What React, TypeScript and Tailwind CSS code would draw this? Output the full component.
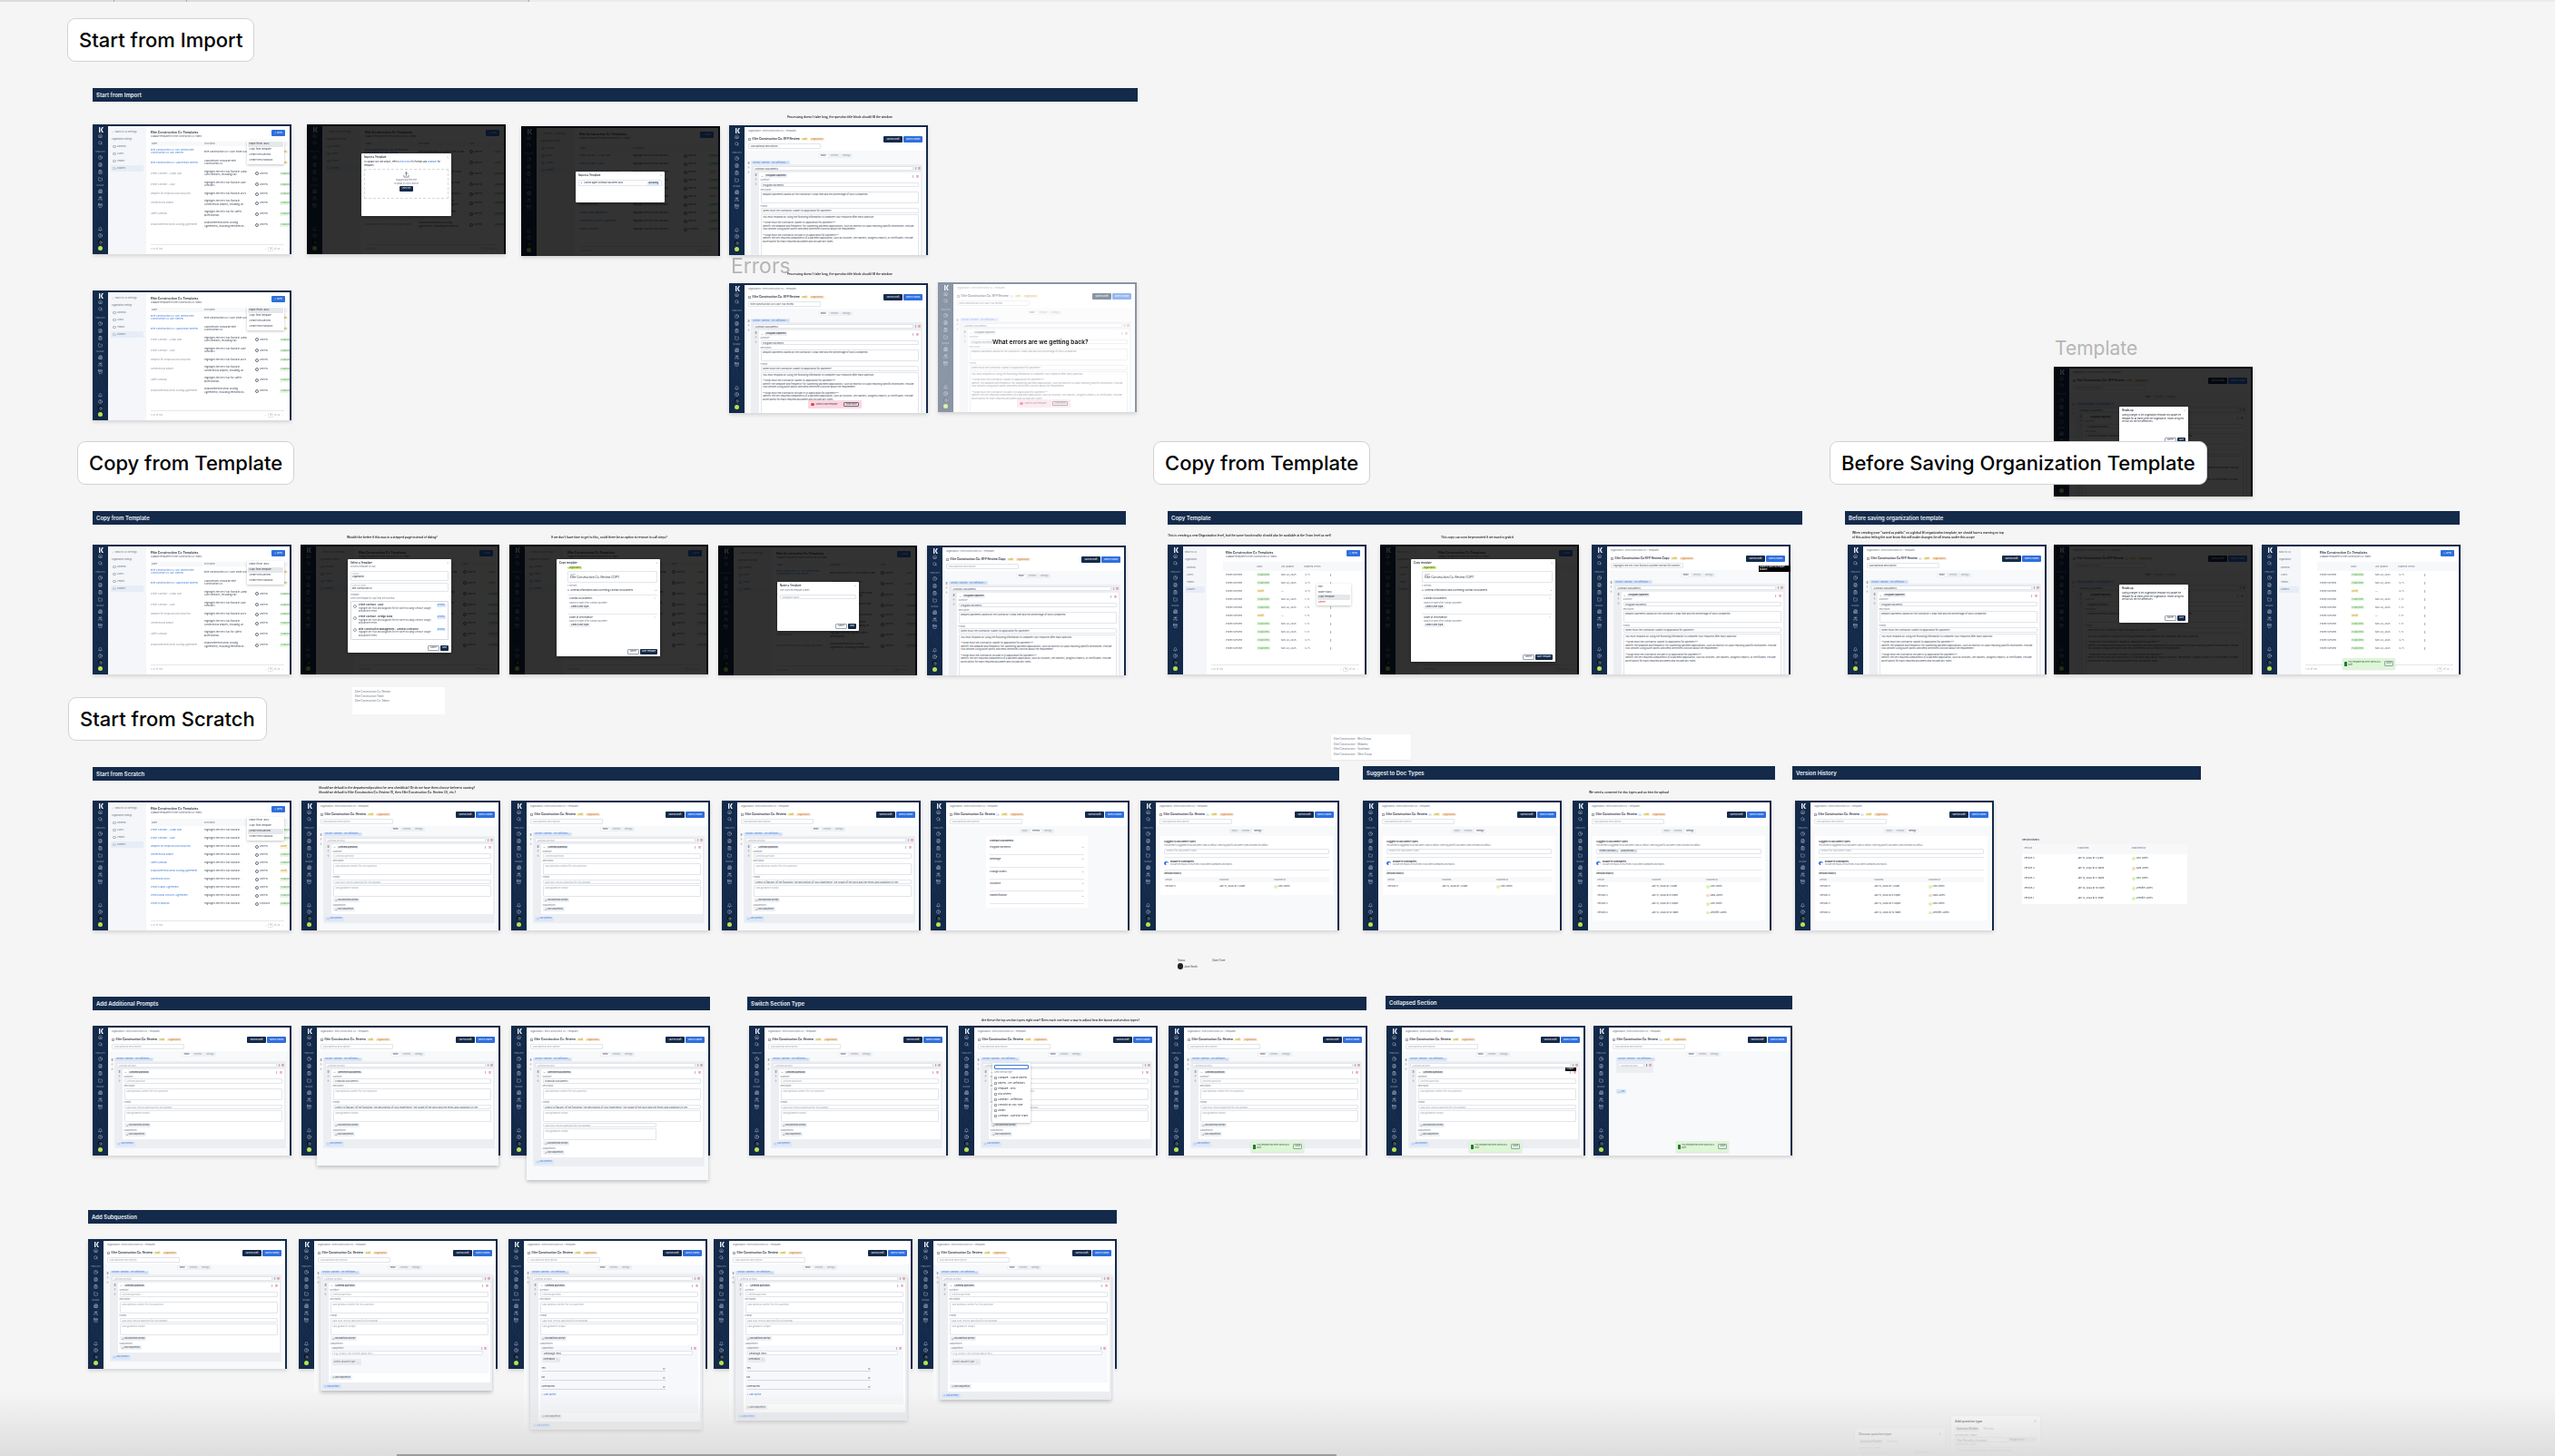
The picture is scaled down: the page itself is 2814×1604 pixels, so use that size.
import type { ReactNode } from "react";
import {
  Archive, ArrowDown, ArrowUp, Bell, Building2, ChevronDown, ChevronLeft, ChevronRight, CircleHelp, ClipboardList,
  Clock, FileText, Folder, GripVertical, Home, MoreVertical, Plus, Search, Settings, Trash2, Upload, Users, X,
} from "lucide-react";

const PROMPT_1 = "You must respond by using the following information to complete your response after each question.";
const PROMPT_2 = "**What must the Contractor submit its application for payment?**";
const PROMPT_3 = "Identify the deadline and frequency for submitting payment applications, such as monthly or upon reaching specific milestones. Provide your answer using bullet points and keep sentences concise about the requirement.";
const PROMPT_4 = "**What must the Contractor include in its application for payment?**";
const PROMPT_5 = "Identify the key required components of a payment application, such as invoices, lien waivers, progress reports, or certificates. Provide bullet points for each required document and include any notes.";

const importRows = [
  { name: "Elite Construction Co. RFP Review Elite Construction Co. RFP Review", desc: "Elite Construction Co.'s RFP Pride Scope", link: true, status: "d" },
  { name: "Elite Construction Co. Subcontract Review", desc: "Subcontracts should be Elite Construction Co.", link: true, status: "d" },
  { name: "Prime Contract - Lump Sum", desc: "Highlights the key risks found in Lump Sum contracts, including Pay...", status: "p" },
  { name: "Prime Contract - GMP", desc: "Highlights the key risks found in GMP contracts.", status: "p" },
  { name: "Request for Proposal (RFP/RFQ/ITB)", desc: "Highlights the key risks found in RFPs.", short: true, status: "p" },
  { name: "Geotechnical Report", desc: "Highlights the key risks found in Geotechnical Reports, including Ge...", status: "p" },
  { name: "Safety Manual", desc: "Highlights the key risks for Safety professionals.", status: "p" },
  { name: "Disbursement/Escrow Closing Agreement", desc: "Disbursement/Escrow Closing Agreements, including Permitted Ex...", status: "p" },
];

const scratchRows = [
  "Prime Contract - Lump Sum", "Prime Contract - GMP", "Request for Proposal (RFP/RFQ/ITB)", "Geotechnical Report", "Safety Manual",
  "Disbursement/Escrow Closing Agreement", "Ownership Policy", "Project Labor Agreement", "Professional Services Agreement", "Project Playbook",
];

const docRows = [
  { s: "Published", d: "Nov 24, 2025", v: "4 / 5" }, { s: "Published", d: "Nov 24, 2025", v: "4 / 5" },
  { s: "Draft", d: "—", v: "4 / 5" }, { s: "Published", d: "Nov 24, 2025", v: "1 / 5" },
  { s: "Published", d: "Nov 24, 2025", v: "1 / 5" }, { s: "Draft", d: "—", v: "1 / 5" },
  { s: "Published", d: "Nov 24, 2025", v: "1 / 5" }, { s: "Published", d: "Nov 24, 2025", v: "1 / 5" },
  { s: "Published", d: "Nov 24, 2025", v: "4 / 5" }, { s: "Published", d: "Nov 24, 2025", v: "4 / 5" },
];

const versions = [
  { v: "Version 5", d: "Jan 15, 2026 at 1:23am", n: "Alex Smith", c: "bg-[#d9f2b4]" },
  { v: "Version 4", d: "Jan 15, 2026 at 9:45pm", n: "Sara Jones", c: "bg-[#f9d9c2]" },
  { v: "Version 3", d: "Jan 14, 2026 at 5:40pm", n: "Alex Smith", c: "bg-[#d9f2b4]" },
  { v: "Version 2", d: "Jan 14, 2026 at 10:19am", n: "Jennifer Jones", c: "bg-[#d9f2b4]" },
  { v: "Version 1", d: "Jan 13, 2026 at 9:47am", n: "Jennifer Jones", c: "bg-[#d9f2b4]" },
];

const Sidebar = () => (
  <div className="relative flex h-[143px] w-[17px] shrink-0 flex-col items-center overflow-hidden pt-[3px] text-[#c4cfdd]">
    <svg viewBox="0 0 17 143" className="absolute inset-0 h-full w-full" fill="none" stroke="#20395f" strokeWidth="0.5">
      <path d="M0 50 C10 60 14 75 6 88 C0 98 10 108 17 112" />
      <path d="M17 70 C8 78 4 92 12 104" />
    </svg>
    <svg viewBox="0 0 6 6" className="relative h-[6px] w-[6px]" fill="#e8edf4">
      <path d="M1 0h1.4v6H1zM3 2.6 4.4 0H6L4.3 3 6 6H4.4L3 3.4z" />
    </svg>
    <div className="relative mt-[1px] flex flex-col gap-[3px]">
      <Home size={5} />
      <Search size={5} />
    </div>
    <div className="relative mt-[6px] h-[3px] text-[1.8px] leading-[3px] text-[#8fa0b8]">TEMPLATES</div>
    <div className="relative mt-[2px] flex flex-col gap-[3px]">
      <Clock size={5} />
      <FileText size={5} />
      <ClipboardList size={5} />
      <Folder size={5} />
    </div>
    <div className="relative mt-[3px] h-[3px] text-[1.8px] leading-[3px] text-[#8fa0b8]">MANAGE</div>
    <div className="relative mt-[2px] flex flex-col gap-[3px]">
      <Building2 size={5} />
      <Users size={5} />
      <Archive size={5} />
    </div>
    <div className="relative mt-auto mb-[4px] flex flex-col items-center gap-[2px]">
      <Bell size={5} />
      <CircleHelp size={5} />
      <div className="flex h-[5px] w-[5px] items-center justify-center rounded-full bg-[#060d18]">
        <Settings size={4} />
      </div>
      <div className="h-[5px] w-[5px] rounded-full bg-[#b6e34f]" />
    </div>
  </div>
);

const Dim = () => <div className="absolute inset-0 bg-black/80" />;
const Fade = () => <div className="absolute inset-0 bg-white/50" />;

function Frame({ children, className = "" }: { children: ReactNode; className?: string }) {
  return (
    <div className={`absolute flex h-[143px] w-[219px] items-start bg-[#142a4a] text-[2.6px] leading-[3.4px] text-[#1d2635] shadow-[0_2px_4px_rgba(0,0,0,0.14)] blur-[0.35px] ${className}`}>
      <Sidebar />
      {children}
    </div>
  );
}

const StatusChip = ({ s }: { s: string }) => (
  <span className={`rounded-[1px] px-[1.5px] ${s === "Draft" ? "bg-[#fdf6d8] text-[#a88a22]" : "bg-[#e6f8e0] text-[#4a9c50]"}`}>{s}</span>
);

const SettingsNav = () => (
  <div className="h-[141px] w-[42px] shrink-0 bg-[#f4f6f9] px-[3px] pt-[5px] text-[#6b7280]">
    <div className="flex items-center gap-[1px] pl-[1px]"><ChevronLeft size={3} />Back to All Settings</div>
    <div className="mt-[5px] pl-[1px] text-[2.2px]">Organization Settings</div>
    <div className="mt-[2px] flex flex-col gap-[1px]">
      {["General", "Users", "Teams"].map((i) => (
        <div key={i} className="flex h-[7px] items-center gap-[1.5px] pl-[2px]"><span className="h-[3.5px] w-[3.5px] rounded-full border-[0.4px] border-[#9ca3af]" />{i}</div>
      ))}
      <div className="flex h-[7px] items-center gap-[1.5px] rounded-[1px] bg-[#e6edf7] pl-[2px]"><Folder size={3.5} />Folders</div>
    </div>
  </div>
);

const Menu = ({ active, items }: { active: number; items: string[] }) => (
  <div className="absolute top-[16px] left-[111px] w-[41px] rounded-[1px] bg-white p-[1px] text-[#374151] shadow-[0_1px_3px_rgba(0,0,0,0.25)]">
    {items.map((it, i) => (
      <div key={it} className={`flex h-[6px] items-center rounded-[1px] px-[1.5px] ${i === active ? "bg-[#e5e7eb]" : ""}`}>{it}</div>
    ))}
  </div>
);

function PageHead() {
  return (
    <div className="flex items-start justify-between pr-[5px]">
      <div className="pt-[1px]">
        <div className="text-[3.4px] leading-[4.4px] font-semibold whitespace-nowrap">Elite Construction Co Templates</div>
        <div className="mt-[0.5px] text-[2.3px] whitespace-nowrap text-[#4b5563]">Available templates for Elite Construction Co. teams.</div>
      </div>
      <div className="flex h-[7px] w-[15px] items-center justify-center gap-[0.5px] rounded-[1px] bg-[#2f6fde] text-white"><Plus size={2.5} />New</div>
    </div>
  );
}

const Pager = () => (
  <div className="absolute right-[6px] bottom-[3px] left-[5px] flex items-center justify-between border-t-[0.5px] border-[#e5e7eb] pt-[2px] text-[#9ca3af]">
    <span>1-10 of 100</span>
    <span className="flex items-center gap-[1.5px]"><ChevronLeft size={3} /><span className="rounded-[1px] border-[0.4px] border-[#e5e7eb] px-[1px] text-[#1d2635]">1</span>of 20<ChevronRight size={3} /></span>
  </div>
);

function ListScreen({ menu = -1, overlay, className }: { menu?: number; overlay?: ReactNode; className?: string }) {
  return (
    <Frame className={className}>
      <div className="mt-[2px] mr-[2px] flex h-[141px] flex-1 overflow-hidden bg-white">
        <SettingsNav />
        <div className="relative min-w-0 flex-1 pt-[4px] pl-[5px]">
          <PageHead />
          <div className="mt-[4px] flex h-[5px] items-center bg-[#f7f8fa] text-[2.2px] text-[#6b7280]">
            <span className="w-[59px] pl-[1px]">Name</span><span className="w-[56px]">Description</span><span>Type</span>
          </div>
          {importRows.map((r, i) => (
            <div key={i} className={`flex items-center ${r.short ? "h-[8.5px]" : "h-[12px]"} whitespace-nowrap`}>
              <span className={`w-[55px] shrink-0 whitespace-normal ${r.link ? "text-[#3b77d9]" : "text-[#8d95a3]"}`}>{r.name}</span>
              <span className="ml-[4px] w-[50px] shrink-0 whitespace-normal text-[#374151]">{r.desc}</span>
              <span className="ml-[6px] flex w-[27px] shrink-0 items-center gap-[1px] text-[#4b5563]"><span className="h-[4px] w-[4px] rounded-full border-[0.4px] border-[#6b7280]" />Review</span>
              <StatusChip s={r.status === "d" ? "Draft" : "Published"} />
            </div>
          ))}
          <Pager />
          {menu >= 0 && <Menu active={menu} items={["Import from .docx", "Copy from template", "Create new Review", "Create new Playbook"]} />}
        </div>
      </div>
      {overlay}
    </Frame>
  );
}

function ScratchList({ menu = -1, overlay, className }: { menu?: number; overlay?: ReactNode; className?: string }) {
  return (
    <Frame className={className}>
      <div className="mt-[2px] mr-[2px] flex h-[141px] flex-1 overflow-hidden bg-white">
        <SettingsNav />
        <div className="relative min-w-0 flex-1 pt-[4px] pl-[5px]">
          <PageHead />
          <div className="mt-[5px] flex h-[8px] items-center bg-[#f7f8fa] text-[2.2px] text-[#6b7280]">
            <span className="w-[59px] pl-[1px]">Name</span><span>Description</span>
          </div>
          {scratchRows.map((n, i) => (
            <div key={n} className="flex h-[9px] items-center whitespace-nowrap">
              <span className="w-[59px] shrink-0 overflow-hidden text-[#3b77d9]">{n}</span>
              <span className="w-[56px] shrink-0 overflow-hidden text-[#374151]">Highlights the key risks found in ...</span>
              <span className="flex w-[27px] shrink-0 items-center gap-[1px] text-[#4b5563]"><span className="h-[4px] w-[4px] rounded-full border-[0.4px] border-[#6b7280]" />{i === 9 ? "Playbook" : "Review"}</span>
              <StatusChip s={i === 2 || i === 5 ? "Draft" : "Published"} />
            </div>
          ))}
          <Pager />
          {menu >= 0 && <Menu active={menu} items={["Import from .docx", "Copy from template", "Create new Review", "Create new Playbook"]} />}
        </div>
      </div>
      {overlay}
    </Frame>
  );
}

function DocsList({ menu = false, overlay, className }: { menu?: boolean; overlay?: ReactNode; className?: string }) {
  return (
    <Frame className={className}>
      <div className="mt-[2px] mr-[2px] flex h-[141px] flex-1 overflow-hidden bg-white">
        <div className="h-[141px] w-[26px] shrink-0 bg-[#f4f6f9] px-[2px] pt-[5px] text-[#6b7280]">
          <div className="whitespace-nowrap">Back to All</div>
          <div className="mt-[5px] text-[2.2px] whitespace-nowrap">Organization</div>
          <div className="mt-[3px] flex flex-col gap-[1px]">
            {["General", "Users", "Teams"].map((i) => <div key={i} className="flex h-[7px] items-center pl-[2px]">{i}</div>)}
            <div className="flex h-[7px] items-center rounded-[1px] bg-[#e6edf7] pl-[2px]">Folders</div>
          </div>
        </div>
        <div className="relative min-w-0 flex-1 pt-[4px] pl-[21px]">
          <PageHead />
          <div className="mt-[4px] -ml-[3px] flex h-[10px] items-center bg-[#f7f8fa] text-[2.2px] text-[#6b7280]">
            <span className="ml-[37px] w-[27px]">Status</span><span className="w-[25px]">Last Updated</span><span>Published Version</span>
          </div>
          {docRows.map((r, i) => (
            <div key={i} className="flex h-[9px] items-center whitespace-nowrap text-[#4b5563]">
              <span className="w-[34px] shrink-0 overflow-hidden">Project Review</span>
              <span className="w-[27px] shrink-0"><StatusChip s={r.s} /></span>
              <span className="w-[26px] shrink-0">{r.d}</span>
              <span className="w-[27px] shrink-0">{r.v}</span>
              <MoreVertical size={3} />
            </div>
          ))}
          <Pager />
          {menu && (
            <div className="absolute top-[41px] left-[121px] w-[38px] rounded-[1px] bg-white p-[1px] text-[#374151] shadow-[0_1px_3px_rgba(0,0,0,0.25)]">
              <div className="flex h-[5.5px] items-center px-[1px]">Edit</div>
              <div className="flex h-[5.5px] items-center px-[1px]">Make Public</div>
              <div className="flex h-[5.5px] items-center rounded-[1px] bg-[#e5e7eb] px-[1px]">Copy template</div>
              <div className="flex h-[5.5px] items-center px-[1px] text-[#dc2626]">Delete</div>
            </div>
          )}
        </div>
      </div>
      {overlay}
    </Frame>
  );
}

const Field = ({ text, muted = false, className = "h-[5.5px]" }: { text?: string; muted?: boolean; className?: string }) => (
  <div className={`rounded-[1px] border-[0.4px] border-[#e2e5ea] bg-white px-[1.5px] py-[0.8px] whitespace-pre-line ${muted ? "text-[#9ca3af]" : "text-[#374151]"} ${className}`}>{text}</div>
);
const Mini = ({ children }: { children: ReactNode }) => <div className="mt-[1.5px] mb-[0.5px] text-[2.2px] leading-[3px] text-[#6b7280]">{children}</div>;
const AddChip = ({ text, blue = false }: { text: string; blue?: boolean }) => (
  <div className={`inline-flex h-[5px] items-center gap-[0.5px] rounded-[1px] px-[2px] text-[2.2px] ${blue ? "bg-[#dbe7f8] text-[#3b77d9]" : "bg-[#eef0f4] text-[#374151]"}`}><Plus size={2.5} />{text}</div>
);
const Stack = () => (
  <div className="flex w-[6px] shrink-0 flex-col items-center gap-[2px] pt-[1px] text-[#6b7280]">
    <GripVertical size={3} /><ArrowUp size={3} /><ArrowDown size={3} />
  </div>
);

type QuestionProps = { filled?: boolean; prompts?: boolean; sub?: number; subPad?: string; long?: boolean; clipped?: boolean };

function Question({ filled = false, prompts = false, sub = 0, subPad = "", long = false, clipped = false }: QuestionProps) {
  return (
    <div className="flex gap-[0.5px]">
      <Stack />
      <div className="min-w-0 flex-1 rounded-[1px] bg-white px-[2px] pt-[2px] pb-[2.5px]">
        <div className="flex items-center justify-between">
          <div className="flex items-center gap-[1.5px]"><ChevronDown size={3} /><span className="rounded-[1px] bg-[#eef0f4] px-[1.5px] font-medium">{clipped ? "Program Payment" : filled ? "Retrieve Documents" : "Untitled question"}</span></div>
          <div className="flex items-center gap-[2px]"><MoreVertical size={3} className="text-[#6b7280]" /><Trash2 size={3} className="text-[#d9415c]" /></div>
        </div>
        <Mini>Question*</Mini>
        <Field text={clipped ? "Program Payments" : filled ? "Financial Documents" : "Untitled question"} muted={!filled && !clipped} />
        <Mini>Description</Mini>
        <Field text={clipped ? "Request payments based on the contractor's lead time and the percentage of work completed." : "Add optional context for this question"} muted={!clipped} className="h-[13px]" />
        <Mini>Prompt</Mini>
        {clipped ? (
          <>
            <Field text="When must the Contractor submit its application for payment?" />
            <Field className="mt-[1px] h-[60px] overflow-hidden" text={`${PROMPT_1}\n\n${PROMPT_2}\n${PROMPT_3}\n\n${PROMPT_4}\n${PROMPT_5}`} />
          </>
        ) : (
          <>
            <Field text={long ? "Check to flag any of the following: the description of your experience, the scope of the work and the terms and conditions in the document" : "Add your yes/no question for this prompt"} muted={!long} className="h-[5.5px] overflow-hidden whitespace-nowrap" />
            <Field text="Add guidance output" muted className="mt-[0.5px] h-[13px]" />
            {prompts && (
              <>
                <Field text="Add your yes/no question for this prompt" muted className="mt-[1px] h-[5.5px] w-[72%]" />
                <Field text="Add guidance output" muted className="mt-[0.5px] h-[13px] w-[72%]" />
              </>
            )}
            <div className="mt-[1.5px]"><AddChip text="Add additional prompt" /></div>
            <Mini>Subquestions</Mini>
            {sub === 1 && (
              <div className={`mb-[1.5px] rounded-[1px] bg-[#f7f8fb] p-[2px] ${subPad}`}>
                <div className="flex justify-between text-[2.2px] text-[#6b7280]">Subquestion<span className="flex gap-[1px]"><MoreVertical size={3} /><Trash2 size={3} className="text-[#d9415c]" /></span></div>
                <Field text="e.g. What is the section about this?" muted className="mr-[4px] mb-[4px] h-[5.5px]" />
                <div className="inline-flex h-[7px] items-center gap-[2px] rounded-[1px] bg-[#e9ebef] px-[2px] text-[#6b7280]">Select answer type<ChevronRight size={2.5} /></div>
              </div>
            )}
            {sub === 2 && (
              <div className={`mb-[1.5px] rounded-[1px] bg-[#f7f8fb] p-[2px] ${subPad}`}>
                <div className="flex justify-between text-[2.2px] text-[#6b7280]">Subquestion<span className="flex gap-[1px]"><MoreVertical size={3} /><Trash2 size={3} className="text-[#d9415c]" /></span></div>
                <Field text="Retainage Held" className="mr-[4px] mb-[1.5px] h-[5.5px]" />
                <div className="inline-flex h-[6.5px] items-center gap-[2px] rounded-[1px] bg-[#e9ebef] px-[2px] text-[#374151]">Checkbox<ChevronRight size={2.5} /></div>
                {["Yes", "No", "Unresolved"].map((o) => (
                  <div key={o} className="mt-[5px] flex w-[80%] items-center justify-between border-b-[0.5px] border-[#d6d9df] pb-[0.5px]">{o}<Trash2 size={2.5} className="text-[#6b7280]" /></div>
                ))}
                <div className="mt-[4px] text-[#3b77d9]">+ Add option</div>
              </div>
            )}
            <AddChip text="Add subquestion" />
          </>
        )}
      </div>
    </div>
  );
}

function EditorHead({ title, blue = false, desc }: { title: string; blue?: boolean; desc?: string }) {
  return (
    <>
      <div className="pt-[3px] pl-[4px] text-[2.3px] text-[#6b7280]">Organization / Elite Construction Co. / Templates</div>
      <div className="mt-[3.5px] flex items-start justify-between pr-[4px] pl-[4px]">
        <div className="flex h-[7px] items-center gap-[1.5px] whitespace-nowrap">
          <span className="h-[3.5px] w-[3px] rounded-[0.5px] border-[0.4px] border-[#9ca3af]" />
          <span className="text-[3.2px] font-semibold">{title}</span>
          {blue && <span className="h-[3.5px] w-[3.5px] rounded-full bg-[#dbe7f8]" />}
          <span className="rounded-[1px] bg-[#fdf3c8] px-[1.5px] text-[2.2px] text-[#a3881c]">Draft</span>
          <span className="rounded-[1px] bg-[#fde6d3] px-[1.5px] text-[2.2px] text-[#c27c3a]">Organization</span>
        </div>
        <div className="flex gap-[1px] text-[2.2px] text-white">
          <span className="flex h-[7px] w-[21px] items-center justify-center rounded-[1px] bg-[#142a4a]">Save as Draft</span>
          <span className="flex h-[7px] w-[21px] items-center justify-center rounded-[1px] bg-[#2f6fde]">Save & Publish</span>
        </div>
      </div>
      <div className="mt-[1.5px] pl-[4px]"><Field text={desc ?? "Add optional description"} muted={!desc} className="h-[5.5px] w-[80px] overflow-hidden whitespace-nowrap" /></div>
    </>
  );
}

const Tabs = ({ active = 0 }: { active?: number }) => (
  <div className="flex justify-center">
    <div className="flex h-[5.5px] items-center gap-[1px] rounded-[1px] bg-[#eef0f4] px-[0.5px] text-[2.2px] text-[#8a93a1]">
      {["Editor", "Preview", "Settings"].map((t, i) => (
        <span key={t} className={`rounded-[1px] px-[2px] ${i === active ? "bg-white text-[#1d2635]" : ""}`}>{t}</span>
      ))}
    </div>
  </div>
);

type EditorProps = QuestionProps & {
  title?: string; blue?: boolean; desc?: string;
  tail?: "none" | "panel" | "section"; height?: string; overlay?: ReactNode; className?: string; roomy?: boolean;
};

function Editor({ title = "Elite Construction Co. Review", blue, desc, filled, clipped, prompts, long, sub = 0, subPad, tail = "none", height = "h-[141px]", overlay, className, roomy }: EditorProps) {
  const section = tail === "section";
  return (
    <Frame className={className}>
      <div className={`mt-[2px] mr-[2px] flex min-w-0 flex-1 flex-col bg-white ${height} ${section ? "" : "overflow-hidden"} ${tail === "panel" ? "relative z-10 shadow-[0_2px_4px_rgba(0,0,0,0.22)]" : ""}`}>
        <EditorHead title={title} blue={blue} desc={desc} />
        <div className={`mt-[2px] flex flex-1 flex-col bg-[#f8f9fb] ${roomy ? "pt-[3px]" : "pt-[1px]"}`}>
          <Tabs />
          <div className={`flex pr-[4px] pl-[1px] ${roomy ? "mt-[3px]" : "mt-[0.5px]"}`}>
            <Stack />
            <div className="min-w-0 flex-1">
              <div className="inline-flex h-[4px] items-center gap-[1px] rounded-[1px] bg-[#dbe7f8] px-[2px] text-[2.2px] text-[#3b77d9]">Section 1 (Review) · Key Definitions<X size={2} /></div>
              <div className={`rounded-[1px] bg-[#eceef2] p-[2px] ${section ? "relative z-10 shadow-[0_2px_4px_rgba(0,0,0,0.25)]" : ""}`}>
                <div className="mb-[2px] flex items-center gap-[1px]">
                  <Field text={clipped ? "Contract Documents" : "Untitled section"} muted={!clipped} className="h-[5px] flex-1" />
                  <MoreVertical size={3} className="text-[#6b7280]" /><Trash2 size={3} className="text-[#d9415c]" />
                </div>
                <Question filled={filled} clipped={clipped} prompts={prompts} long={long} sub={sub} subPad={subPad} />
                <div className="mt-[2.5px]"><AddChip text="Add question" blue /></div>
              </div>
            </div>
          </div>
        </div>
      </div>
      {overlay}
    </Frame>
  );
}

function CollapsedEditor({ overlay, className }: { overlay?: ReactNode; className?: string }) {
  return (
    <Frame className={className}>
      <div className="mt-[2px] mr-[2px] flex h-[141px] min-w-0 flex-1 flex-col overflow-hidden bg-white">
        <EditorHead title="Elite Construction Co. Review" blue />
        <div className="mt-[2px] flex-1 bg-[#f8f9fb] pt-[1px] pl-[8px]">
          <Tabs />
          <div className="mt-[0.5px] inline-flex h-[4px] items-center gap-[1px] rounded-[1px] bg-[#dbe7f8] px-[2px] text-[2.2px] text-[#3b77d9]">Section 1 (Review) · Key Definitions<X size={2} /></div>
          <div className="mt-[0.5px] flex w-[41px] items-center gap-[1px] rounded-[1px] bg-[#eceef2] p-[2px] pb-[6px]">
            <Field text="Untitled section" muted className="h-[5px] flex-1" /><MoreVertical size={3} /><Trash2 size={3} className="text-[#d9415c]" />
          </div>
          <div className="mt-[18px]"><AddChip text="Add" blue /></div>
        </div>
      </div>
      {overlay}
    </Frame>
  );
}

function SettingsEditor({ rows = 1, chips = false, className }: { rows?: number; chips?: boolean; className?: string }) {
  return (
    <Frame className={className}>
      <div className="mt-[2px] mr-[2px] flex h-[141px] min-w-0 flex-1 flex-col overflow-hidden bg-white">
        <EditorHead title="Elite Construction Co. Review" blue />
        <div className="mt-[2px] flex-1 bg-[#f8f9fb] px-[5px] pt-[3px]">
          <Tabs active={2} />
          <div className="mt-[3px] rounded-[1px] bg-white px-[4px] pt-[5px] pb-[4px]">
            <div className="text-[2.6px] font-semibold">Suggest to document types</div>
            <div className="text-[2.1px] whitespace-nowrap text-[#6b7280]">This Review is suggested for all document types by default. Selecting specific document types overrides this default.</div>
            <div className="mt-[1.5px] flex h-[6.5px] items-center gap-[1px] rounded-[1px] border-[0.4px] border-[#e2e5ea] px-[1.5px] text-[#9ca3af]">
              {chips ? (<><span className="rounded-[1px] bg-[#e9ebef] px-[1px] text-[#374151]">Prime contract ×</span><span className="rounded-[1px] bg-[#e9ebef] px-[1px] text-[#374151]">Subcontract ×</span></>) : "Search for document types"}
            </div>
            <div className="my-[3px] h-[0.5px] bg-[#e5e7eb]" />
            <div className="flex items-center gap-[2px]">
              <span className="flex h-[4px] w-[5px] items-center justify-end rounded-full bg-[#2f6fde] pr-[0.5px]"><span className="h-[3px] w-[3px] rounded-full bg-white" /></span>
              <div><div className="font-semibold">Enable in summaries</div><div className="text-[2.1px] whitespace-nowrap text-[#6b7280]">Include the results of this review in document summaries and reports.</div></div>
            </div>
            <div className="my-[3px] h-[0.5px] bg-[#e5e7eb]" />
            <div className="text-[2.6px] font-semibold">Version history</div>
            <div className="mt-[2px] grid h-[6px] grid-cols-3 items-center bg-[#f7f8fa] px-[1px] text-[2.2px] text-[#6b7280]"><span>Version</span><span>Published</span><span>Published by</span></div>
            {versions.slice(0, rows).map((v) => (
              <div key={v.v} className="grid h-[9.5px] grid-cols-3 items-center px-[1px] text-[#374151]"><span>{v.v}</span><span>{v.d}</span><span className="flex items-center gap-[1px]"><span className={`h-[3.5px] w-[3.5px] rounded-full ${v.c}`} />{v.n}</span></div>
            ))}
          </div>
        </div>
      </div>
    </Frame>
  );
}

function PreviewEditor({ className }: { className?: string }) {
  return (
    <Frame className={className}>
      <div className="mt-[2px] mr-[2px] flex h-[141px] min-w-0 flex-1 flex-col overflow-hidden bg-white">
        <EditorHead title="Elite Construction Co. Review" blue />
        <div className="mt-[2px] flex flex-1 flex-col items-center bg-[#f8f9fb] pt-[3px]">
          <Tabs active={1} />
          <div className="mt-[3px] w-[112px] rounded-[1px] bg-white p-[4px]">
            <div className="font-semibold">Contract Documents</div>
            {["Program Payments", "Retainage", "Change Orders", "Insurance", "Indemnification"].map((q) => (
              <div key={q} className="mt-[3px] flex items-center justify-between border-b-[0.4px] border-[#e5e7eb] pb-[6px]">{q}<ChevronDown size={3} /></div>
            ))}
          </div>
        </div>
      </div>
    </Frame>
  );
}

const ModalHead = ({ title }: { title: string }) => (
  <div className="flex items-center justify-between"><span className="text-[2.8px] font-semibold">{title}</span><X size={2.5} className="text-[#6b7280]" /></div>
);
const Modal = ({ className, children }: { className: string; children: ReactNode }) => (
  <div className={`absolute rounded-[1px] bg-white p-[3px] text-[#1d2635] shadow-[0_1px_4px_rgba(0,0,0,0.4)] ${className}`}>{children}</div>
);
const ModalActions = ({ primary = "Next" }: { primary?: string }) => (
  <div className="absolute right-[3px] bottom-[2px] flex gap-[1px] text-[2.2px]">
    <span className="flex h-[6px] items-center rounded-[1px] border-[0.4px] border-[#9ca3af] px-[2px]">Cancel</span>
    <span className="flex h-[6px] items-center rounded-[1px] bg-[#142a4a] px-[2px] text-white">{primary}</span>
  </div>
);

const ImportModal = () => (
  <>
    <Dim />
    <Modal className="top-[32px] left-[60px] h-[69px] w-[99px]">
      <ModalHead title="Import a Template" />
      <div className="mt-[2px] text-[2.3px]">To upload your own Report, refer to <span className="text-[#3b77d9]">Instructions</span> for formats and <span className="text-[#3b77d9]">Examples</span> for templates.</div>
      <div className="mt-[2px] flex h-[33px] flex-col items-center rounded-[1px] border-[0.4px] border-dashed border-[#d6d9df] pt-[2px] text-center text-[2px] text-[#6b7280]">
        <Upload size={7} className="text-[#374151]" />
        <div className="mt-[1px]">Drag and drop files here</div><div>to upload, or click to browse</div>
        <span className="mt-[1px] flex h-[6px] items-center rounded-[1px] bg-[#142a4a] px-[3px] text-white">Select File</span>
      </div>
    </Modal>
  </>
);
const ImportingModal = () => (
  <>
    <Dim />
    <Modal className="top-[50px] left-[60px] h-[34px] w-[98px]">
      <ModalHead title="Import a Template" />
      <div className="mt-[3px] flex h-[7px] items-center justify-between rounded-[1px] border-[0.4px] border-[#e2e5ea] px-[2px] text-[2.3px]">
        <span className="flex items-center gap-[2px]"><span className="h-[1px] w-[1px] rounded-full bg-[#3b77d9]" />Custom agent schedule document.docx</span>
        <span className="rounded-[1px] bg-[#dbe7f8] px-[1px]">Uploading</span>
      </div>
    </Modal>
  </>
);
const SelectModal = () => (
  <>
    <Dim />
    <Modal className="top-[16px] left-[52px] h-[103px] w-[114px]">
      <ModalHead title="Select a Template" />
      <div className="mt-[1px] text-[2.2px] text-[#6b7280]">Choose a template to copy</div>
      <div className="mt-[2px] rounded-[1px] border-[0.4px] border-[#e2e5ea] p-[1px] text-[2.2px]"><div className="text-[#9ca3af]">Source</div>Organization</div>
      <div className="mt-[2px] rounded-[1px] border-[0.4px] border-[#e2e5ea] p-[1px] text-[2.2px]"><div className="text-[#9ca3af]">Select a Team</div>Elite Construction Co.</div>
      <div className="mt-[2px] text-[2.2px] text-[#6b7280]">Template<br />Select one template to copy from the list below</div>
      <div className="mt-[1px] h-[43px] overflow-hidden rounded-[1px] border-[0.4px] border-[#d6d9df] p-[2px]">
        {["Prime Contract - GMP", "Prime Contract - Design Build", "Elite Construction Management - General Contractor"].map((t) => (
          <div key={t} className="mb-[3px] flex items-start gap-[2px]">
            <span className="mt-[0.5px] h-[4px] w-[4px] shrink-0 rounded-full border-[0.4px] border-[#9ca3af]" />
            <div className="flex-1"><div className="font-semibold">{t}</div><div className="text-[2.2px] text-[#4b5563]">Highlights key risks and obligations for the owner including schedule, budget and payment terms.</div></div>
            <span className="rounded-[1px] bg-[#dbe7f8] px-[1.5px] text-[2.2px] text-[#3b77d9]">Review</span>
          </div>
        ))}
      </div>
      <ModalActions />
    </Modal>
  </>
);
const CopyBody = () => (
  <div className="mt-[2px] pl-[9px]">
    <span className="rounded-[1px] bg-[#d2ee7d] px-[2px] text-[2.1px] text-[#3f5a12]">Organization</span>
    <div className="mt-[1px] rounded-[1px] border-[0.4px] border-[#e2e5ea] p-[2px]"><div className="text-[2.1px] text-[#9ca3af]">Name</div><div className="text-[3.2px]">Elite Construction Co. Review COPY</div></div>
    <div className="mt-[2px] text-[2.2px] text-[#6b7280]">1 Sections</div>
    <div className="mt-[2px] flex items-center justify-between"><span>A. General Information and Governing Contract Documents</span><ChevronDown size={3} /></div>
    {["Contract Documents", "Order of Precedence"].map((s) => (
      <div key={s} className="mt-[3px] rounded-[1px] border-t-[0.4px] border-[#e5e7eb] p-[2px]">
        <div className="flex justify-between">{s}<ChevronRight size={2.5} /></div>
        <div className="mt-[1px] text-[2px] text-[#6b7280]">What is the name of the contract document?</div>
        <span className="mt-[1px] inline-block rounded-[1px] bg-[#eef0f4] px-[2px]">Select one type</span>
      </div>
    ))}
  </div>
);
const CopyModal = ({ className }: { className: string }) => (
  <>
    <Dim />
    <Modal className={`overflow-hidden ${className}`}>
      <ModalHead title="Copy template" />
      <CopyBody />
      <div className="absolute right-0 bottom-0 left-0 h-[11px] bg-white" />
      <ModalActions primary="Save Template" />
    </Modal>
  </>
);
const RenameModal = () => (
  <>
    <Dim />
    <Modal className="top-[40px] left-[65px] h-[54px] w-[90px]">
      <ModalHead title="Name a Template" />
      <div className="mt-[2px] text-[2.2px] text-[#6b7280]">Give your new template a name.</div>
      <div className="mt-[2px]"><Field text="Template name" muted /></div>
      <ModalActions />
    </Modal>
  </>
);
const PublishModal = () => (
  <>
    <Dim />
    <Modal className="top-[44px] left-[72px] h-[42px] w-[76px]">
      <ModalHead title="Heads up" />
      <div className="mt-[2px] text-[2.3px]">Saving changes to this organization template will update the template for all teams within the organization. Teams using this version will see the differences.</div>
      <ModalActions primary="Save" />
    </Modal>
  </>
);
const ErrorToast = () => (
  <div className="absolute top-[129px] left-[87px] flex h-[9px] w-[59px] items-center gap-[2px] bg-[#fbd7e0] px-[3px] text-[2.2px] text-[#374151]">
    <span className="h-[3.5px] w-[3.5px] rounded-full bg-[#d9415c]" />Failed to save template<span className="ml-auto rounded-[1px] border-[0.4px] border-[#6b7280] px-[1.5px]">Show more</span>
  </div>
);
const SavedToast = ({ className }: { className: string }) => (
  <div className={`absolute flex h-[12px] w-[58px] items-center gap-[1.5px] rounded-[1px] bg-[#ddf6d5] px-[2px] text-[2.2px] text-[#4b5563] shadow-[0_1px_2px_rgba(0,0,0,0.12)] ${className}`}>
    <span className="h-[5px] w-[2.5px] rounded-[0.5px] bg-[#1f7a35]" /><span className="flex-1">This template has been saved as a draft.</span><span className="rounded-[1px] border-[0.4px] border-[#9aa3af] px-[1px]">Close</span>
  </div>
);
const Tip = ({ className, text }: { className: string; text: string }) => (
  <div className={`absolute rounded-[0.5px] bg-black px-[1px] text-[2px] leading-[2.5px] text-white ${className}`}>{text}</div>
);
const SwitchMenu = () => (
  <div className="absolute top-[41px] left-[37px] h-[66px] w-[42px] rounded-[1px] bg-white p-[2px] shadow-[0_1px_3px_rgba(0,0,0,0.25)]">
    <div className="h-[5px] rounded-[1px] border-[0.4px] border-[#3b77d9]" />
    <div className="mt-[2px] text-[2.2px] text-[#6b7280]">Select section type</div>
    {["Compare - Clause Review", "Review - Key Definitions", "Template - Intro", "Risk Review", "Summary - Definitions", "Checklist by Doc Type", "Library", "Schedule - Question Types"].map((t) => (
      <div key={t} className="mt-[2.6px] flex items-center gap-[1px] whitespace-nowrap"><span className="h-[3px] w-[3px] shrink-0 rounded-[0.5px] border-[0.4px] border-[#9ca3af]" />{t}</div>
    ))}
  </div>
);

const Label = ({ className, children }: { className: string; children: ReactNode }) => (
  <div className={`absolute z-20 flex h-[48px] items-center rounded-[9px] border border-[#d2d2d2] bg-white px-[12px] text-[22px] font-medium whitespace-nowrap text-black ${className}`}>{children}</div>
);
const Bar = ({ className, children }: { className: string; children: ReactNode }) => (
  <div className={`absolute flex h-[15px] items-center bg-[#142a4a] pl-[4px] text-[6px] font-semibold text-[#e8edf4] ${className}`}>{children}</div>
);
const Note = ({ className, children }: { className: string; children: ReactNode }) => (
  <div className={`absolute text-[3.2px] leading-[5px] font-semibold whitespace-nowrap text-[#222] blur-[0.2px] ${className}`}>{children}</div>
);

const FloatCard = ({ className, title }: { className: string; title: string }) => (
  <div className={`absolute h-[60px] rounded-[3px] bg-white px-[4px] pt-[4px] text-[3px] text-[#374151] shadow-[0_1px_3px_rgba(0,0,0,0.08)] ${className}`}>
    <div className="flex justify-between text-[3.4px] font-semibold text-[#1d2635]">{title}<X size={3} /></div>
    <div className="mt-[3px] flex gap-[2px]"><span className="rounded-[1px] bg-[#eef0f4] px-[2px]">Question Builder</span><span className="px-[2px] text-[#9ca3af]">Preview</span></div>
    <div className="mt-[3px] text-[2.4px] text-[#6b7280]">Question text / Name</div>
    <div className="flex gap-[1px]"><Field text="Pay Period by Location" className="h-[6px] flex-1" /><span className="flex w-[31px] items-center rounded-[1px] bg-[#e9ebef] px-[1px]">Single Entry</span></div>
    <div className="mt-[1px] text-[2.4px] text-[#6b7280]">Question text / Guide</div>
    <Field text="This is where reviewers enter their answer." className="h-[6px]" />
  </div>
);

export default function App() {
  return (
    <div className="relative h-[1604px] w-[2814px] overflow-hidden bg-[#f5f5f5] font-['Inter','Noto_Sans',sans-serif]">
      <div className="absolute top-0 left-0 h-[2px] w-full bg-[#ececec]" />
      <div className="absolute top-0 left-0 h-[2px] w-[582px] bg-[#dcdcdc]" />
      <div className="absolute top-0 left-[125px] h-[2px] w-[1px] bg-[#aaa]" />
      <div className="absolute top-0 left-[205px] h-[2px] w-[1px] bg-[#aaa]" />
      <div className="absolute top-0 left-[582px] h-[2px] w-[1px] bg-[#aaa]" />

      <Label className="top-[20px] left-[74px]">Start from Import</Label>
      <Bar className="top-[97px] left-[102px] w-[1151px]">Start from Import</Bar>
      <ListScreen className="top-[137px] left-[102px]" menu={0} />
      <ListScreen className="top-[137px] left-[338px]" overlay={<ImportModal />} />
      <ScratchList className="top-[139px] left-[574px]" overlay={<ImportingModal />} />
      <Note className="top-[127px] left-[867px]">Processing doesn't take long, the question title block should fill the window</Note>
      <Editor className="top-[138px] left-[803px]" title="Elite Construction Co. RFP Review" clipped filled desc="Add optional description" roomy />
      <div className="absolute top-[280px] left-[805px] text-[23px] leading-[26px] text-[#b5b5b5]">Errors</div>
      <Note className="top-[300px] left-[867px]">Processing doesn't take long, the question title block should fill the window</Note>
      <Editor className="top-[312px] left-[803px]" title="Elite Construction Co. RFP Review" clipped filled desc="Elite Construction Co's RFP risk review" roomy overlay={<ErrorToast />} />
      <Editor className="top-[311px] left-[1033px]" title="Elite Construction Co. RFP Review" blue clipped filled desc="Elite Construction Co's RFP risk review" roomy overlay={<><ErrorToast /><Fade /></>} />
      <div className="absolute top-[372px] left-[1093px] text-[6.6px] leading-[10px] font-semibold whitespace-nowrap text-[#111]">What errors are we getting back?</div>
      <ListScreen className="top-[320px] left-[102px]" menu={0} />

      <div className="absolute top-[372px] left-[2263px] text-[21px] leading-[24px] text-[#b5b5b5]">Template</div>
      <Editor className="top-[404px] left-[2262px]" title="Elite Construction Co. RFP Review" clipped filled roomy overlay={<PublishModal />} />

      <Label className="top-[486px] left-[85px]">Copy from Template</Label>
      <Label className="top-[486px] left-[1270px]">Copy from Template</Label>
      <Label className="top-[486px] left-[2015px]">Before Saving Organization Template</Label>

      <Bar className="top-[563px] left-[102px] w-[1138px]">Copy from Template</Bar>
      <Note className="top-[590px] left-[382px]">Would it be better if this was in a stepped page instead of dialog?</Note>
      <Note className="top-[590px] left-[607px]">If we don't have time to get to this, could there be an option to remove in call steps?</Note>
      <ListScreen className="top-[600px] left-[102px]" menu={1} />
      <ListScreen className="top-[600px] left-[331px]" overlay={<SelectModal />} />
      <ListScreen className="top-[600px] left-[561px]" overlay={<CopyModal className="top-[16px] left-[52px] h-[107px] w-[114px]" />} />
      <ListScreen className="top-[601px] left-[791px]" overlay={<RenameModal />} />
      <Editor className="top-[601px] left-[1021px]" title="Elite Construction Co. RFP Review Copy" clipped filled roomy />

      <Bar className="top-[563px] left-[1286px] w-[699px]">Copy Template</Bar>
      <Note className="top-[588px] left-[1286px]">This is creating a new Organization level, but the same functionality should also be available at the Team level as well</Note>
      <Note className="top-[590px] left-[1587px]">This copy can now be promoted if we want to grab it</Note>
      <DocsList className="top-[600px] left-[1286px]" menu />
      <DocsList className="top-[600px] left-[1520px]" overlay={<CopyModal className="top-[16px] left-[34px] h-[113px] w-[159px]" />} />
      <Editor className="top-[600px] left-[1753px]" title="Elite Construction Co RFP Review Copy" clipped filled roomy desc="Highlights the key risks found in a prime contract for owners." overlay={<Tip className="top-[23px] left-[184px] h-[7px] w-[35px]" text="Publish to make this template available" />} />

      <Bar className="top-[563px] left-[2032px] w-[677px]">Before saving organization template</Bar>
      <Note className="top-[585px] left-[2040px]">When creating your "saved as public" on a global lift organization template, we should have a warning on top<br />of this action letting the user know this will make changes for all teams under this scope</Note>
      <Editor className="top-[600px] left-[2035px]" title="Elite Construction Co RFP Review" blue clipped filled roomy desc="Add optional description" />
      <Editor className="top-[600px] left-[2262px]" title="Elite Construction Co RFP Review" blue clipped filled roomy overlay={<PublishModal />} />
      <DocsList className="top-[600px] left-[2491px]" overlay={<SavedToast className="top-[125px] left-[89px]" />} />

      <div className="absolute top-[757px] left-[388px] h-[30px] w-[102px] rounded-[1px] bg-white p-[3px] text-[2.8px] leading-[5px] text-[#6b7280]">
        <div>Elite Construction Co. Review</div>
        <div>Elite Construction Team</div>
        <div>Elite Construction Co. Admin</div>
      </div>

      <Label className="top-[768px] left-[75px]">Start from Scratch</Label>
      <div className="absolute top-[809px] left-[1466px] h-[28px] w-[88px] rounded-[1px] bg-white p-[3px] text-[2.8px] leading-[5.5px] text-[#6b7280] shadow-[0_1px_2px_rgba(0,0,0,0.06)]">
        <div>Elite Construction - Best Group</div>
        <div>Elite Construction - Midwest</div>
        <div>Elite Construction - Southeast</div>
        <div>Elite Construction - West Group</div>
      </div>

      <Bar className="top-[845px] left-[102px] w-[1373px]">Start from Scratch</Bar>
      <Note className="top-[866px] left-[351px]">Should we default to the department/position for new checklists? Or do we have them choose before in naming?<br />Should we default to Elite Construction Co. Review (1), then Elite Construction Co. Review (2), etc.?</Note>
      <ScratchList className="top-[882px] left-[102px]" menu={2} />
      <Editor className="top-[882px] left-[332px]" />
      <Editor className="top-[882px] left-[563px]" />
      <Editor className="top-[882px] left-[795px]" long />
      <PreviewEditor className="top-[882px] left-[1025px]" />
      <SettingsEditor className="top-[882px] left-[1256px]" />

      <Bar className="top-[844px] left-[1501px] w-[454px]">Suggest to Doc Types</Bar>
      <Note className="top-[871px] left-[1750px]">We need a comment for doc types and an item for upload</Note>
      <SettingsEditor className="top-[882px] left-[1501px]" />
      <SettingsEditor className="top-[882px] left-[1732px]" rows={4} chips />

      <Bar className="top-[844px] left-[1974px] w-[450px]">Version History</Bar>
      <SettingsEditor className="top-[882px] left-[1977px]" rows={4} />
      <div className="absolute top-[924px] left-[2227px] w-[182px] text-[2.6px] text-[#374151] blur-[0.2px]">
        <div className="font-semibold">Version history</div>
        <div className="mt-[2px] bg-white">
          <div className="grid h-[11px] grid-cols-3 items-center bg-[#f7f8fa] px-[2px] text-[#6b7280]"><span>Version</span><span>Published</span><span>Published by</span></div>
          {versions.map((v) => (
            <div key={v.v} className="grid h-[11px] grid-cols-3 items-center px-[2px]"><span>{v.v}</span><span>{v.d}</span><span className="flex items-center gap-[1px]"><span className={`h-[4px] w-[4px] rounded-full ${v.c}`} />{v.n}</span></div>
          ))}
        </div>
      </div>

      <div className="absolute top-[1056px] left-[1297px] text-[2.8px] text-[#374151]">
        <div className="flex gap-[30px]"><span>Status</span><span>Date/Time</span></div>
        <div className="mt-[1px] flex items-center gap-[1px]"><span className="h-[7px] w-[6px] rounded-full bg-[#222]" />Jane Smith</div>
      </div>

      <Bar className="top-[1098px] left-[102px] w-[680px]">Add Additional Prompts</Bar>
      <Editor className="top-[1130px] left-[102px]" />
      <Editor className="top-[1130px] left-[332px]" filled long tail="panel" height="h-[152px]" />
      <Editor className="top-[1130px] left-[563px]" filled long prompts tail="panel" height="h-[168px]" />

      <Bar className="top-[1098px] left-[823px] w-[682px]">Switch Section Type</Bar>
      <Note className="top-[1122px] left-[1081px]">Are these the top section types right now? Does each one have a way to adjust how the layout and section types?</Note>
      <Editor className="top-[1130px] left-[825px]" />
      <Editor className="top-[1130px] left-[1056px]" overlay={<SwitchMenu />} />
      <Editor className="top-[1130px] left-[1287px]" overlay={<SavedToast className="top-[127px] left-[91px]" />} />

      <Bar className="top-[1097px] left-[1526px] w-[448px]">Collapsed Section</Bar>
      <Editor className="top-[1130px] left-[1527px]" overlay={<><SavedToast className="top-[127px] left-[91px]" /><Tip className="top-[46px] left-[197px] h-[4px] w-[12px]" text="Collapse" /></>} />
      <CollapsedEditor className="top-[1130px] left-[1755px]" overlay={<SavedToast className="top-[127px] left-[91px]" />} />

      <Bar className="top-[1333px] left-[97px] w-[1133px]">Add Subquestion</Bar>
      <Editor className="top-[1365px] left-[97px]" />
      <Editor className="top-[1365px] left-[329px]" tail="section" sub={1} subPad="pb-[9px]" />
      <Editor className="top-[1365px] left-[560px]" tail="section" sub={2} subPad="pb-[18px]" />
      <Editor className="top-[1365px] left-[786px]" tail="section" sub={2} subPad="pb-[8px]" />
      <Editor className="top-[1365px] left-[1011px]" tail="section" sub={1} subPad="pb-[19px]" />

      <FloatCard className="top-[1574px] left-[2043px] w-[99px]" title="Choose question type" />
      <FloatCard className="top-[1560px] left-[2149px] w-[98px]" title="Add question type" />

      <div className="absolute inset-x-0 bottom-0 z-30 h-[70px] bg-linear-to-b from-transparent to-[#dddddd]" />
      <div className="absolute bottom-0 left-[437px] z-30 h-[2px] w-[1035px] bg-[#9c9c9c]" />
    </div>
  );
}
